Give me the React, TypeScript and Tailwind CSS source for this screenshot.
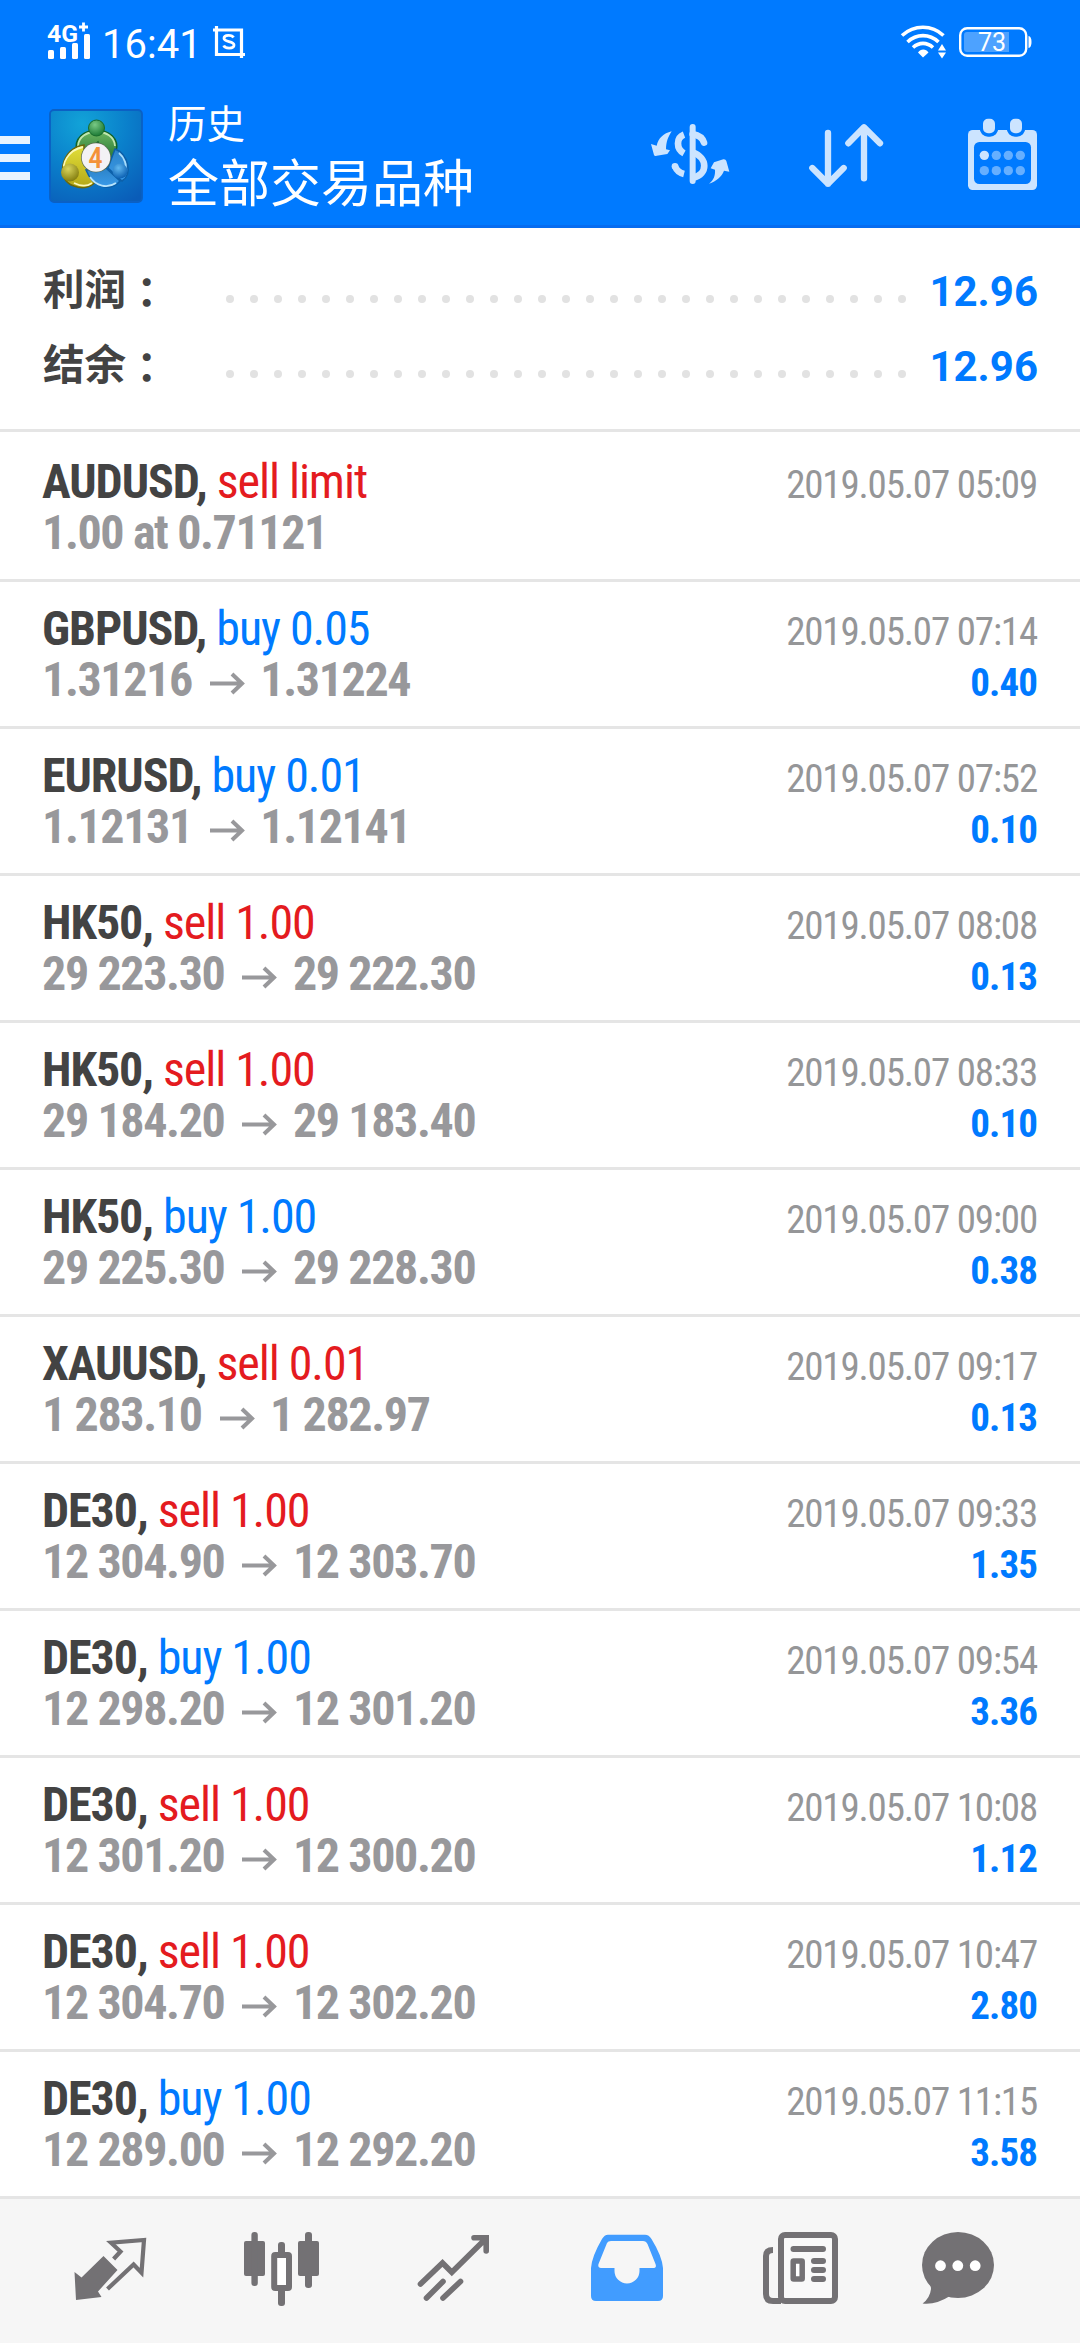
type Trade = {
  symbol: string;
  side: "buy" | "sell";
  size: string;
  open: string;
  close?: string;
  time: string;
  profit?: string;
};

const trades: Trade[] = [
  { symbol: "AUDUSD", side: "sell", size: "limit", open: "1.00 at 0.71121", time: "2019.05.07 05:09" },
  { symbol: "GBPUSD", side: "buy", size: "0.05", open: "1.31216", close: "1.31224", time: "2019.05.07 07:14", profit: "0.40" },
  { symbol: "EURUSD", side: "buy", size: "0.01", open: "1.12131", close: "1.12141", time: "2019.05.07 07:52", profit: "0.10" },
  { symbol: "HK50", side: "sell", size: "1.00", open: "29 223.30", close: "29 222.30", time: "2019.05.07 08:08", profit: "0.13" },
  { symbol: "HK50", side: "sell", size: "1.00", open: "29 184.20", close: "29 183.40", time: "2019.05.07 08:33", profit: "0.10" },
  { symbol: "HK50", side: "buy", size: "1.00", open: "29 225.30", close: "29 228.30", time: "2019.05.07 09:00", profit: "0.38" },
  { symbol: "XAUUSD", side: "sell", size: "0.01", open: "1 283.10", close: "1 282.97", time: "2019.05.07 09:17", profit: "0.13" },
  { symbol: "DE30", side: "sell", size: "1.00", open: "12 304.90", close: "12 303.70", time: "2019.05.07 09:33", profit: "1.35" },
  { symbol: "DE30", side: "buy", size: "1.00", open: "12 298.20", close: "12 301.20", time: "2019.05.07 09:54", profit: "3.36" },
  { symbol: "DE30", side: "sell", size: "1.00", open: "12 301.20", close: "12 300.20", time: "2019.05.07 10:08", profit: "1.12" },
  { symbol: "DE30", side: "sell", size: "1.00", open: "12 304.70", close: "12 302.20", time: "2019.05.07 10:47", profit: "2.80" },
  { symbol: "DE30", side: "buy", size: "1.00", open: "12 289.00", close: "12 292.20", time: "2019.05.07 11:15", profit: "3.58" },
];

const totals = [
  { label: "利润", value: "12.96" },
  { label: "结余", value: "12.96" },
];

const StatusBar = () => (
  <div className="flex h-[84px] items-center justify-between pr-12 pl-12 text-white">
    <div className="flex items-center">
      <svg className="h-10 w-11 overflow-visible" viewBox="0 0 44 40" fill="#fff">
        <text x="-1" y="20" fontSize="24" fontWeight="700" className="font-['Roboto',sans-serif]" textLength="31" lengthAdjust="spacingAndGlyphs">
          4G
        </text>
        <path d="M31 5h9M35.500 .5v9" stroke="#fff" strokeWidth="2.800" />
        <rect x="0" y="28" width="6" height="9" rx="1.500" />
        <rect x="12" y="25" width="6" height="12" rx="1.500" />
        <rect x="24" y="21" width="6" height="16" rx="1.500" />
        <rect x="36" y="12" width="6" height="25" rx="1.500" />
      </svg>
      <span className="ml-2.5 pt-1.5 font-['Roboto',sans-serif] text-[40px] leading-none">16:41</span>
      <svg className="ml-[11px] h-8 w-8" viewBox="0 0 32 32" fill="none" stroke="#fff">
        <path d="M0 4h28.500v28M3.500 0v28.500H32" strokeWidth="3.200" />
        <path d="M20.500 11.500c-1.500-3-9.500-3-9.500.8 0 4.200 10 2.300 10 6.700 0 4.200-9 4-10.300.6" strokeWidth="2.800" />
      </svg>
    </div>
    <div className="flex items-center">
      <svg className="h-[34px] w-12" viewBox="0 0 48 34" fill="none" stroke="#fff" strokeWidth="3.600">
        <path d="M2 10.500c12-11 30-11 41.500 0" />
        <path d="M7.500 17c9-8.500 22-8.500 31 0" />
        <path d="M13 22.500c6-5.500 14-5.500 20 0" />
        <path d="M18 27.500c2.500-4 8-4 10.500 0L23 32.500z" fill="#fff" stroke="none" />
        <path d="M38 25.500h8l-4-6.500zM38 27.500h8l-4 6z" fill="#fff" stroke="none" />
      </svg>
      <svg className="ml-[11px] h-[30px] w-[73px]" viewBox="0 0 73 30">
        <rect x="1.200" y="1.200" width="66" height="27.600" rx="7" fill="none" stroke="#fff" strokeWidth="2.400" />
        <path d="M5 8q0-3 3-3h42v20H8q-3 0-3-3z" fill="#4da2ff" />
        <path d="M69.500 9q3 .5 3 6t-3 6z" fill="#fff" />
        <text x="19" y="24" fontSize="25" fill="#fff" className="font-['Roboto',sans-serif]">73</text>
      </svg>
    </div>
  </div>
);

const Logo = () => (
  <svg className="h-[94px] w-[94px]" viewBox="-1 -1 94 94">
    <defs>
      <radialGradient id="bg" cx=".35" cy=".15" r="1">
        <stop offset="0" stopColor="#12a3d8" />
        <stop offset=".5" stopColor="#0a7fcb" />
        <stop offset="1" stopColor="#0a5cb8" />
      </radialGradient>
      <linearGradient id="green" x2="0" y2="1">
        <stop offset="0" stopColor="#6fb863" />
        <stop offset="1" stopColor="#176b2c" />
      </linearGradient>
      <linearGradient id="yellow" x2="0" y2="1">
        <stop offset="0" stopColor="#e3e03a" />
        <stop offset="1" stopColor="#b3a717" />
      </linearGradient>
      <linearGradient id="sky" x2="0" y2="1">
        <stop offset="0" stopColor="#2c83c8" />
        <stop offset="1" stopColor="#3a9bea" />
      </linearGradient>
      <radialGradient id="gHead" cx=".4" cy=".3" r=".7">
        <stop offset="0" stopColor="#79c985" />
        <stop offset="1" stopColor="#1c7a35" />
      </radialGradient>
      <radialGradient id="yHead" cx=".4" cy=".3" r=".7">
        <stop offset="0" stopColor="#d9d55c" />
        <stop offset="1" stopColor="#857f10" />
      </radialGradient>
      <radialGradient id="bHead" cx=".4" cy=".3" r=".7">
        <stop offset="0" stopColor="#62b8f0" />
        <stop offset="1" stopColor="#0d62b4" />
      </radialGradient>
    </defs>
    <rect x="0" y="0" width="92" height="92" rx="4" fill="url(#bg)" stroke="#0b60c4" strokeWidth="1.800" />
    <path d="M27 42C19 13 74 13 66 42L58 54 48 32 36 42z" fill="url(#green)" stroke="#12642b" strokeWidth="1.500" />
    <path d="M28 36C29 17 64 17 65 36" fill="none" stroke="#c0e6ae" strokeWidth="1.800" />
    <path d="M65 39C78 44 83 64 72 71L58 58z" fill="url(#sky)" stroke="#0d5fa8" strokeWidth="1.500" />
    <path d="M69 43C75 48 77 56 75 60" fill="none" stroke="#a8dcfa" strokeWidth="1.800" />
    <path d="M34 35C12 37 4 70 24 76 34 80 44 76 46 70L34 54z" fill="url(#yellow)" stroke="#6b670c" strokeWidth="1.500" />
    <path d="M33 37C18 40 11 54 15 62M24 73C32 77 38 76 42 73" fill="none" stroke="#faf8b8" strokeWidth="1.800" />
    <path d="M36 60C43 78 61 82 70 71L56 58z" fill="url(#sky)" stroke="#0d5fa8" strokeWidth="1.500" />
    <path d="M40 67C46 76 57 79 66 73" fill="none" stroke="#b8e4fc" strokeWidth="1.800" />
    <circle cx="46.500" cy="18" r="8" fill="url(#gHead)" stroke="#176b2c" />
    <circle cx="20" cy="62.500" r="9" fill="url(#yHead)" />
    <circle cx="70" cy="61" r="7.500" fill="url(#bHead)" />
    <circle cx="46" cy="47.500" r="15" fill="#5a6b50" />
    <circle cx="46" cy="47.500" r="14.300" fill="#f3f2f5" />
    <text x="45.500" y="57.500" fontSize="29" fontWeight="500" textAnchor="middle" fill="#f3923a" className="font-['Roboto_Condensed',sans-serif]">
      4
    </text>
  </svg>
);

const Toolbar = () => (
  <div className="flex h-[141px] items-start pr-[42px]">
    <div className="mt-[52px] flex w-[30px] flex-col gap-2.5">
      <div className="h-2 bg-[#e8f3ff]" />
      <div className="h-2 bg-[#e8f3ff]" />
      <div className="h-2 bg-[#e8f3ff]" />
    </div>
    <div className="mt-[25px] ml-[19px]">
      <Logo />
    </div>
    <div className="ml-[25px] flex-1 pt-[15px] font-['Noto_Sans_CJK_SC',sans-serif] text-white">
      <p className="text-[38.5px] leading-[44px]">历史</p>
      <h1 className="mt-[7px] text-[51px] leading-[60px]">全部交易品种</h1>
    </div>
    <svg className="mt-[31px] h-[78px] w-20" viewBox="30 30 240 234" fill="none" stroke="#cce4ff" strokeWidth="20">
      <path d="M158 66V228" strokeLinecap="round" strokeWidth="18" />
      <path d="M158 87Q186 92 192 113" strokeLinecap="round" />
      <path d="M132 89C108 98 108 132 132 145" />
      <path d="M158 142C204 158 204 208 160 218" />
      <path d="M105 184Q112 202 132 207" />
      <circle cx="105" cy="184" r="10" fill="#cce4ff" stroke="none" />
      <path d="M95 79C70 85 55 100 50 122L33 117 42 150Q44 154 50 152L82 147 90 136 78 133C78 110 85 95 95 79z" fill="#cce4ff" stroke="none" />
      <path d="M207 236C222 225 226 210 225 194L212 190 222 172 250 163Q257 162 259 168L268 200 252 197C245 215 230 228 207 236z" fill="#cce4ff" stroke="none" />
    </svg>
    <svg className="mt-[31px] ml-[77px] h-[78px] w-20" viewBox="561 345 240 234" fill="none" stroke="#cce4ff" strokeWidth="19" strokeLinecap="round" strokeLinejoin="round">
      <path d="M624 399V551M577 504L624 551 671 504" />
      <path d="M732 535V382M685 430L732 382 780 430" />
    </svg>
    <svg className="mt-[31px] ml-20 h-[78px] w-[71px]" viewBox="1041 345 213 234" fill="#cce4ff">
      <rect x="1044" y="390" width="207" height="180" rx="14" />
      <rect x="1062" y="426" width="171" height="126" rx="16" fill="#007aff" />
      <g stroke="#007aff" strokeWidth="10">
        <rect x="1084" y="351" width="46" height="54" rx="20" />
        <rect x="1165" y="351" width="46" height="54" rx="20" />
      </g>
      <circle cx="1093" cy="466" r="14" />
      <g fill="#66afff">
        <circle cx="1129" cy="466" r="14" />
        <circle cx="1165" cy="466" r="14" />
        <circle cx="1201" cy="466" r="14" />
        <circle cx="1093" cy="512" r="14" />
        <circle cx="1129" cy="512" r="14" />
        <circle cx="1165" cy="512" r="14" />
        <circle cx="1201" cy="512" r="14" />
      </g>
    </svg>
  </div>
);

const Summary = () => (
  <section className="h-[204px] border-b-[3px] border-[#e5e5e5] pt-[25px]">
    {totals.map((item) => (
      <div key={item.label} className="flex h-[75px] items-center pr-[42px] pl-[43px]">
        <div className="-mt-[3px] flex w-[183px] font-['Noto_Sans_CJK_SC',sans-serif] text-[41.5px] leading-[75px] font-bold text-[#434343]">
          <span>{item.label}</span>
          <span className="mt-[3px] font-['Noto_Sans_CJK_TC',sans-serif]">：</span>
        </div>
        <div className="mt-4 flex gap-4">
          {Array.from({ length: 29 }, (_, i) => (
            <div key={i} className="size-2 rounded-full bg-[#e2e2e2]" />
          ))}
        </div>
        <div className="mt-px flex-1 text-right font-['Roboto',sans-serif] text-[42px] leading-[75px] font-bold text-[#007aff]">
          {item.value}
        </div>
      </div>
    ))}
  </section>
);

const TradeRow = ({ trade }: { trade: Trade }) => (
  <li className="border-b-[3px] border-[#e5e5e5] px-[42px] pt-[21px] pb-[21px] first:pt-6">
    <div className="flex h-[51px] items-baseline justify-between leading-[51px]">
      <div className="text-[48px] tracking-[-1.05px]">
        <span className="font-bold text-[#434343]">{trade.symbol},</span>{" "}
        <span className={trade.side === "buy" ? "text-[#007aff]" : "text-[#e41b1f]"}>
          {trade.side} {trade.size}
        </span>
      </div>
      <div className="mr-px text-[39px] tracking-[-1.18px] text-[#959698]">{trade.time}</div>
    </div>
    <div className="flex h-[51px] items-baseline justify-between leading-[51px]">
      <div className="flex items-baseline text-[48px] font-bold tracking-[-1.38px] text-[#98989b]">
        <span>{trade.open}</span>
        {trade.close && (
          <>
            <svg className="mr-[14.5px] ml-[18px] h-6 w-9" viewBox="0 0 36 24" fill="none" stroke="currentColor" strokeWidth="4">
              <path d="M0 11.500H33M22 2L32 11.500 22 21" />
            </svg>
            <span>{trade.close}</span>
          </>
        )}
      </div>
      <div className="mr-px text-[39px] font-bold tracking-[-0.9px] text-[#007aff]">{trade.profit}</div>
    </div>
  </li>
);

const BottomNav = () => (
  <nav className="flex flex-1 items-start bg-[#f6f6f6] px-6 pt-[31px] text-[#737174]">
    <div className="flex flex-1 justify-center">
      <svg className="size-20" viewBox="0 0 80 80">
        <path d="M4.500 42L11.500 47.500 33.500 26 47.500 40 28 61.500 31.500 67 6 70z" fill="currentColor" />
        <path d="M43.600 29L50.500 21.500 41 12.700 74 10 71.500 42.700 63.600 34.500 37.500 59" fill="none" stroke="currentColor" strokeWidth="4.200" />
      </svg>
    </div>
    <div className="flex flex-1 justify-center">
      <svg className="size-20" viewBox="2 0 80 80" fill="currentColor">
        <rect x="4" y="11" width="21" height="35" rx="2" />
        <rect x="11.400" y="2" width="6.400" height="54" rx="3" />
        <rect x="38" y="12" width="7" height="64" rx="3" />
        <rect x="34.200" y="25" width="14.800" height="33" rx="1" fill="#fff" stroke="currentColor" strokeWidth="6" />
        <rect x="58" y="11" width="21" height="35" rx="2" />
        <rect x="65" y="2" width="7" height="56" rx="3" />
      </svg>
    </div>
    <div className="flex flex-1 justify-center">
      <svg className="size-20" viewBox="1 0 80 80" fill="none" stroke="currentColor" strokeWidth="5.600" strokeLinecap="round">
        <path d="M7.500 54L29.500 33 38.800 42.300 73 8.500M61 7.700H73.200V21" />
        <path d="M13.500 68L30 51.500M30 68L47.500 51.500" />
      </svg>
    </div>
    <div className="flex flex-1 justify-center">
      <svg className="size-20" viewBox="-1 0 80 80" fill="#419cff" fillRule="evenodd">
        <path d="M21 4.700H58Q62 4.700 64.500 9 75 26 76 38V66Q76 71 71 71H9Q4 71 4 66V38Q5 26 15 9 17.500 4.700 21 4.700zM24 11Q21 11 20 13L11.500 34Q10.500 38 14 38H27.500V41A12.500 12.500 0 0 0 52.500 41V38H66Q70 38 68.500 34L60.500 14Q59 11 56 11z" />
      </svg>
    </div>
    <div className="flex flex-1 justify-center">
      <svg className="size-20" viewBox="-3 0 80 80" fill="none" stroke="currentColor">
        <rect x="20" y="5" width="54" height="66" rx="4" strokeWidth="6" fill="#f9f9f9" />
        <path d="M12 20Q5 20 5 26V64Q5 71 12 71H20" strokeWidth="6" />
        <path d="M32.500 19H62M53 31H62M53 40H62M53 49H62" strokeWidth="6" strokeLinecap="round" />
        <rect x="32.200" y="31" width="9" height="18" rx=".5" strokeWidth="5.500" fill="#fff" />
      </svg>
    </div>
    <div className="flex flex-1 justify-center">
      <svg className="-ml-6 size-20" viewBox="0 0 80 80" fill="currentColor">
        <ellipse cx="40" cy="35" rx="36" ry="33" />
        <path d="M8 50Q13 54 13 59 12 68 4.600 73.500 18 75 32 66z" />
        <g fill="#fff">
          <circle cx="22.500" cy="35.700" r="5.400" />
          <circle cx="39.800" cy="35.700" r="5.400" />
          <circle cx="57.200" cy="35.700" r="5.400" />
        </g>
      </svg>
    </div>
  </nav>
);

export default function App() {
  return (
    <div className="flex h-[2343px] w-[1080px] flex-col overflow-hidden bg-white font-['Roboto_Condensed',sans-serif]">
      <header className="border-b-[3px] border-[#066cf0] bg-[#007aff]">
        <StatusBar />
        <Toolbar />
      </header>
      <Summary />
      <ul>
        {trades.map((trade) => (
          <TradeRow key={trade.time} trade={trade} />
        ))}
      </ul>
      <BottomNav />
    </div>
  );
}
